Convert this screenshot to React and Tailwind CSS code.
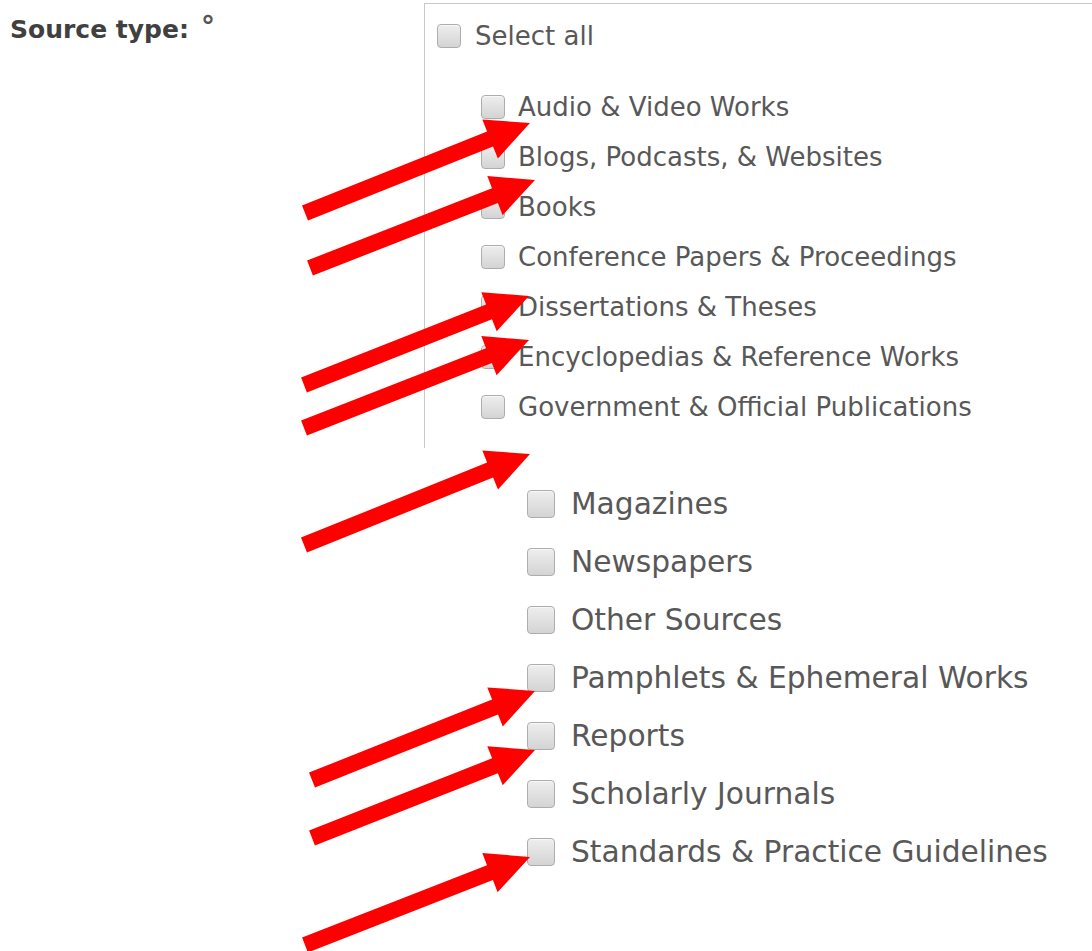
import React from "react";

const topTypes = [
  "Audio & Video Works",
  "Blogs, Podcasts, & Websites",
  "Books",
  "Conference Papers & Proceedings",
  "Dissertations & Theses",
  "Encyclopedias & Reference Works",
  "Government & Official Publications",
];

const moreTypes = [
  "Magazines",
  "Newspapers",
  "Other Sources",
  "Pamphlets & Ephemeral Works",
  "Reports",
  "Scholarly Journals",
  "Standards & Practice Guidelines",
];

// tail -> tip for each pointer
const arrows = [
  [305, 213, 530, 123],
  [310, 268, 535, 180],
  [304, 385, 529, 296],
  [304, 428, 529, 340],
  [304, 545, 530, 454],
  [312, 780, 535, 691],
  [312, 838, 535, 750],
  [305, 945, 530, 857],
];

function arrowPoints([tx, ty, px, py]) {
  const len = Math.hypot(px - tx, py - ty);
  const dx = (px - tx) / len;
  const dy = (py - ty) / len;
  const nx = -dy;
  const ny = dx;
  const head = 43;
  const hw = 21;
  const sw = 8;
  const bx = px - dx * head;
  const by = py - dy * head;
  const pts = [
    [tx + nx * sw, ty + ny * sw],
    [bx + nx * sw, by + ny * sw],
    [bx + nx * hw, by + ny * hw],
    [px, py],
    [bx - nx * hw, by - ny * hw],
    [bx - nx * sw, by - ny * sw],
    [tx - nx * sw, ty - ny * sw],
  ];
  return pts.map((p) => p.map((v) => v.toFixed(1)).join(",")).join(" ");
}

function Box({ big }) {
  return (
    <span
      className={`shrink-0 rounded-[4px] border border-[#adadad] bg-linear-to-b from-[#eeeeee] to-[#d4d4d4] shadow-[inset_0_1px_0_#f8f8f8] ${
        big ? "w-[28px] h-[28px]" : "w-[24px] h-[24px]"
      }`}
    />
  );
}

export default function App() {
  return (
    <div className="relative min-h-[951px] w-full bg-white font-['DejaVu_Sans',Verdana,sans-serif] overflow-hidden">
      <div className="flex">
        <div className="w-[424px] shrink-0 pl-[10px] pt-[15px]">
          <span className="text-[25px] leading-[30px] font-bold text-[#404040]">
            Source type:
          </span>
          <span className="text-[28px] leading-[24px] align-top font-bold text-[#555] ml-[12px]">°</span>
        </div>

        <div className="flex-1">
          <div className="mt-[3px] h-[445px] border-l border-t border-[#c8c8c8] pl-[12px] pt-[7px]">
            <label className="flex h-[50px] items-center gap-[14px]">
              <Box />
              <span className="text-[26px] leading-none text-[#585858]">Select all</span>
            </label>
            <div className="mt-[21px] pl-[44px]">
              {topTypes.map((t) => (
                <label key={t} className="flex h-[50px] items-center gap-[13px]">
                  <Box />
                  <span className="text-[26px] leading-none text-[#585858]">{t}</span>
                </label>
              ))}
            </div>
          </div>

          <div className="pl-[103px] pt-[27px]">
            {moreTypes.map((t) => (
              <label key={t} className="flex h-[58px] items-center gap-[16px]">
                <Box big />
                <span className="text-[29.7px] leading-none text-[#585858]">{t}</span>
              </label>
            ))}
          </div>
        </div>
      </div>

      <svg
        className="pointer-events-none absolute inset-0"
        width="1092"
        height="951"
        viewBox="0 0 1092 951"
      >
        {arrows.map((a, i) => (
          <polygon key={i} points={arrowPoints(a)} fill="#ff0000" />
        ))}
      </svg>
    </div>
  );
}
